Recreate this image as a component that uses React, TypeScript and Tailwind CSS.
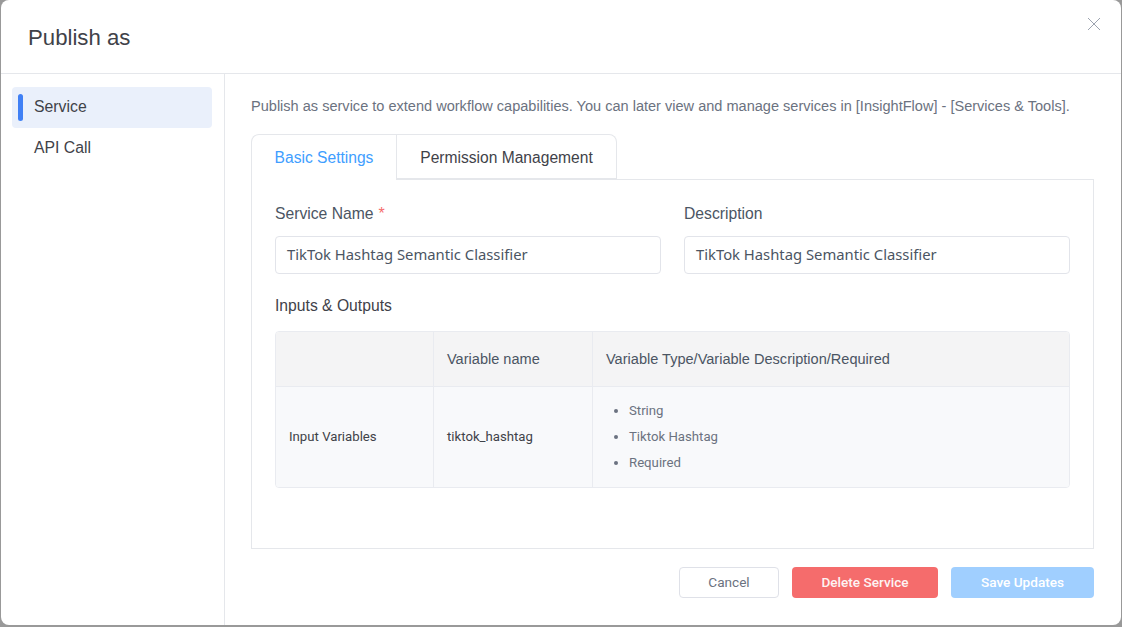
import React from 'react';

const Field = ({ label, required, value }: { label: string; required?: boolean; value: string }) => (
  <div className="flex-1">
    <div className="h-[18px] flex items-center pt-[2px] text-[15.7px] leading-[18px] text-[#4b5563]">
      {label}
      <span className={required ? 'ml-[5px] text-[16px] text-[#f56c6c]' : 'hidden'}>*</span>
    </div>
    <div className="mt-[14px] h-[38px] flex items-center pb-[2px] px-[11px] bg-white border border-[#e2e4ea] rounded-[4px] font-['Noto_Sans',sans-serif] text-[14.8px] text-[#4b5563]">
      {value}
    </div>
  </div>
);

export default function App() {
  return (
    <div className="w-[1122px] h-[627px] bg-[#999999] overflow-hidden pl-px pb-[2px] pr-px font-['Liberation_Sans',Arial,sans-serif]">
      <div className="relative w-full h-full bg-white rounded-[8px] flex flex-col overflow-hidden">
        <div className="h-[74px] shrink-0 border-b border-[#e5e7eb] pl-[27px] pt-[24px] text-[22.2px] leading-[28px] text-[#3f4249]">
          Publish as
        </div>
        <button className="absolute top-[17px] right-[20px] text-[#9ca3af]">
          <svg width="14" height="14" viewBox="0 0 14 14" fill="none" stroke="currentColor" strokeWidth="1">
            <path d="M1 1 L13 13 M13 1 L1 13" />
          </svg>
        </button>

        <div className="flex-1 flex min-h-0">
          {/* Sidebar */}
          <div className="w-[224px] shrink-0 border-r border-[#e5e7eb] pt-[13px] pl-[11px] pr-[12px] text-[15.8px] text-[#3f4249]">
            <div className="h-[41px] flex items-center pb-[2px] bg-[#eaf0fb] rounded-[4px] pl-[6px]">
              <span className="w-[5px] h-[27px] mt-[2px] bg-[#4080f5] rounded-full mr-[11px]" />
              Service
            </div>
            <div className="h-[41px] flex items-center pb-[2px] pl-[22px]">API Call</div>
          </div>

          {/* Main */}
          <div className="flex-1 min-w-0 pl-[26px] pr-[27px] pt-[23px]">
            <p className="h-[18px] text-[14.55px] leading-[18px] text-[#6b7280] whitespace-nowrap">
              Publish as service to extend workflow capabilities. You can later view and manage services in [InsightFlow] - [Services &amp; Tools].
            </p>

            <div className="mt-[19px] flex h-[46px] relative z-10 text-[15.6px]">
              <div className="w-[146px] h-[46px] flex items-center justify-center pt-[1px] bg-white border border-[#e5e7eb] border-b-0 rounded-tl-[8px] text-[#409eff]">
                Basic Settings
              </div>
              <div className="w-[220px] h-[45px] flex items-center justify-center pt-[2px] border border-l-0 border-[#e5e7eb] rounded-tr-[8px] text-[#3f4249]">
                Permission Management
              </div>
            </div>

            <div className="-mt-px h-[370px] border border-[#e5e7eb] px-[23px] pt-[24px]">
              <div className="flex gap-[23px]">
                <Field label="Service Name" required value="TikTok Hashtag Semantic Classifier" />
                <Field label="Description" value="TikTok Hashtag Semantic Classifier" />
              </div>

              <div className="mt-[23px] h-[18px] text-[15.7px] leading-[18px] text-[#3f4249]">Inputs &amp; Outputs</div>

              <div className="mt-[16px] border border-[#e9ebf0] rounded-[4px] overflow-hidden">
                <div className="flex h-[55px] bg-[#f4f4f5] border-b border-[#e9ebf0] text-[14.55px] text-[#4b5563]">
                  <div className="w-[158px] border-r border-[#e9ebf0]" />
                  <div className="w-[159px] flex items-center pt-[2px] pl-[13px] border-r border-[#e9ebf0]">Variable name</div>
                  <div className="flex-1 flex items-center pt-[2px] pl-[13px]">Variable Type/Variable Description/Required</div>
                </div>
                <div className="flex h-[100px] bg-[#f8f9fb] font-['Roboto',sans-serif] text-[13.2px]">
                  <div className="w-[158px] flex items-center pl-[13px] border-r border-[#e9ebf0] text-[#3f4249]">Input Variables</div>
                  <div className="w-[159px] flex items-center pl-[13px] border-r border-[#e9ebf0] text-[#3f4249]">tiktok_hashtag</div>
                  <ul className="flex-1 flex flex-col justify-center gap-[8px] pl-[36px] list-disc text-[#6b7280]">
                    <li className="h-[18px] leading-[18px]">String</li>
                    <li className="h-[18px] leading-[18px]">Tiktok Hashtag</li>
                    <li className="h-[18px] leading-[18px]">Required</li>
                  </ul>
                </div>
              </div>
            </div>

            <div className="mt-[18px] flex justify-end gap-[13px] font-['Roboto',sans-serif] text-[13.6px]">
              <button className="w-[100px] h-[31px] bg-white border border-[#dfe1e8] rounded-[4px] text-[#6b7280]">Cancel</button>
              <button className="w-[146px] h-[31px] bg-[#f56c6c] rounded-[4px] font-medium text-[#fdf3f3]">Delete Service</button>
              <button className="w-[143px] h-[31px] bg-[#a0cfff] rounded-[4px] font-medium text-white">Save Updates</button>
            </div>
          </div>
        </div>
      </div>
    </div>
  );
}
